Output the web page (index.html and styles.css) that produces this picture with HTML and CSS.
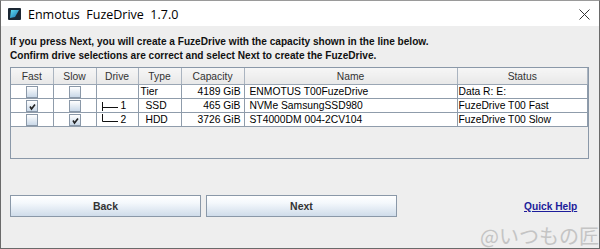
FILE: index.html
```html
<!DOCTYPE html>
<html>
<head>
<meta charset="utf-8">
<link rel="stylesheet" href="styles.css">
</head>
<body>
<div class="window">
  <div class="titlebar">
    <svg class="appicon" width="13" height="12" viewBox="0 0 13 12">
      <defs>
        <linearGradient id="g" x1="0" y1="0" x2="1" y2="1">
          <stop offset="0" stop-color="#5fe0f0"/>
          <stop offset="1" stop-color="#1a6fb0"/>
        </linearGradient>
      </defs>
      <rect x="0" y="0" width="13" height="12" rx="1" fill="#1b2733"/>
      <path d="M3 2 L11 2 L7 9 L2 10 Z" fill="url(#g)"/>
    </svg>
    <span class="title">Enmotus&nbsp; FuzeDrive&nbsp; 1.7.0</span>
    <svg class="close" width="11" height="11" viewBox="0 0 11 11">
      <path d="M0.5 0.5 L10.5 10.5 M10.5 0.5 L0.5 10.5" stroke="#333" stroke-width="1" fill="none"/>
    </svg>
  </div>
  <div class="content">
    <p class="intro">If you press Next, you will create a FuzeDrive with the capacity shown in the line below.<br>Confirm drive selections are correct and select Next to create the FuzeDrive.</p>
    <div class="pane">
      <table class="grid">
        <colgroup>
          <col class="c-fast"><col class="c-slow"><col class="c-drive"><col class="c-type"><col class="c-cap"><col class="c-name"><col class="c-status">
        </colgroup>
        <thead>
          <tr><th>Fast</th><th>Slow</th><th>Drive</th><th>Type</th><th>Capacity</th><th>Name</th><th>Status</th></tr>
        </thead>
        <tbody>
          <tr>
            <td class="cb"><span class="box"></span></td>
            <td class="cb"><span class="box"></span></td>
            <td></td>
            <td class="type">Tier</td>
            <td class="cap">4189 GiB</td>
            <td class="txt">ENMOTUS T00FuzeDrive</td>
            <td class="txt">Data R: E:</td>
          </tr>
          <tr>
            <td class="cb"><span class="box"><svg width="9" height="9" viewBox="0 0 9 9"><path d="M2 4.5 L3.5 7 L7 2.5" stroke="#222" stroke-width="1.6" fill="none"/></svg></span></td>
            <td class="cb"><span class="box"></span></td>
            <td class="drive"><svg width="18" height="12" viewBox="0 0 18 12"><path d="M0.5 2 V11 M0.5 7.5 H16" stroke="#111" stroke-width="1" fill="none"/></svg>1</td>
            <td class="type mid">SSD</td>
            <td class="cap">465 GiB</td>
            <td class="txt">NVMe SamsungSSD980</td>
            <td class="txt">FuzeDrive T00 Fast</td>
          </tr>
          <tr>
            <td class="cb"><span class="box"></span></td>
            <td class="cb"><span class="box"><svg width="9" height="9" viewBox="0 0 9 9"><path d="M2 4.5 L3.5 7 L7 2.5" stroke="#222" stroke-width="1.6" fill="none"/></svg></span></td>
            <td class="drive"><svg width="18" height="12" viewBox="0 0 18 12"><path d="M0.5 0 V7.5 H16" stroke="#111" stroke-width="1" fill="none"/></svg>2</td>
            <td class="type mid">HDD</td>
            <td class="cap">3726 GiB</td>
            <td class="txt">ST4000DM 004-2CV104</td>
            <td class="txt">FuzeDrive T00 Slow</td>
          </tr>
        </tbody>
      </table>
    </div>
    <div class="actions">
      <button class="btn">Back</button>
      <button class="btn">Next</button>
      <a class="help" href="#">Quick Help</a>
    </div>
  </div>
  <div class="watermark">@いつもの匠</div>
</div>
</body>
</html>
```

FILE: styles.css
```css
html, body {
  margin: 0;
  padding: 0;
  background: #ffffff;
}
.window {
  position: relative;
  width: 600px;
  height: 249px;
  box-sizing: border-box;
  border: 1px solid #6a6a6a;
  border-top-color: #9a9a9a;
  background: #eeeeee;
  overflow: hidden;
  font-family: "Liberation Sans", Arial, sans-serif;
}
.titlebar {
  height: 25px;
  background: #ffffff;
  display: flex;
  align-items: center;
  padding-left: 7px;
  padding-right: 9px;
}
.appicon {
  display: block;
  margin-top: 1px;
}
.title {
  margin-left: 7px;
  font-family: "Open Sans", "Noto Sans", sans-serif;
  font-size: 12.5px;
  color: #000;
  margin-top: 1px;
}
.close {
  margin-left: auto;
  margin-top: 2px;
}
.content {
  padding: 9px 10px 0 9px;
}
.intro {
  margin: 0;
  font-size: 10.1px;
  font-weight: bold;
  line-height: 14px;
  color: #111;
}
.pane {
  margin-top: 4px;
  height: 90px;
  border: 1px solid #8a98a8;
  background: #eeeeee;
}
.grid {
  border-collapse: collapse;
  width: 100%;
  table-layout: fixed;
  font-size: 10.3px;
}
.c-fast { width: 42px; }
.c-slow { width: 43px; }
.c-drive { width: 42px; }
.c-type { width: 43px; }
.c-cap { width: 63px; }
.c-name { width: 213px; }
.grid th {
  height: 16px;
  padding: 0;
  font-weight: normal;
  color: #333;
  background: linear-gradient(#f6f6f6, #e8e8e8);
  border-left: 1px solid #aab4c0;
  border-right: 1px solid #aab4c0;
  border-bottom: 1px solid #9aa6b4;
  text-align: center;
}
.grid th:first-child { border-left: none; }
.grid td {
  height: 12px;
  padding: 0 2px;
  background: #ffffff;
  border: 1px solid #8f9cab;
  color: #000;
  white-space: nowrap;
  overflow: hidden;
  line-height: 12px;
}
.grid tr td:first-child { border-left: none; }
.grid td.cb {
  text-align: center;
  padding: 0;
}
.box {
  display: inline-block;
  vertical-align: top;
  width: 10px;
  height: 10px;
  margin-top: 1px;
  border: 1px solid #8a98a8;
  background: linear-gradient(#ffffff, #c9d8e8);
  position: relative;
}
.box svg {
  position: absolute;
  left: 1px;
  top: 1px;
}
.drive {
  padding-left: 5px !important;
}
.drive svg {
  vertical-align: top;
  margin-right: 1px;
}
.type { padding-left: 2px; }
.type.mid { padding-left: 7px; }
.cap { text-align: right; padding-right: 3px !important; }
.txt { padding-left: 5px !important; }
.grid td:last-child { padding-left: 1px !important; }
.actions {
  margin-top: 36px;
  display: flex;
  align-items: center;
}
.btn {
  width: 191px;
  height: 22px;
  margin: 0 5px 0 0;
  padding: 0;
  border: 1px solid #8a98a8;
  background: linear-gradient(#ffffff 0%, #f4f8fc 35%, #cfdcea 100%);
  font-family: "Liberation Sans", Arial, sans-serif;
  font-weight: bold;
  font-size: 10.5px;
  color: #333;
}
.help {
  margin-left: 122px;
  font-size: 10.2px;
  font-weight: bold;
  color: #1c1c9a;
  text-decoration: underline;
}
.watermark {
  position: absolute;
  right: 0;
  bottom: 1px;
  font-family: "Noto Sans CJK JP", sans-serif;
  font-size: 20px;
  line-height: 22px;
  color: #c4c4c4;
}
```
